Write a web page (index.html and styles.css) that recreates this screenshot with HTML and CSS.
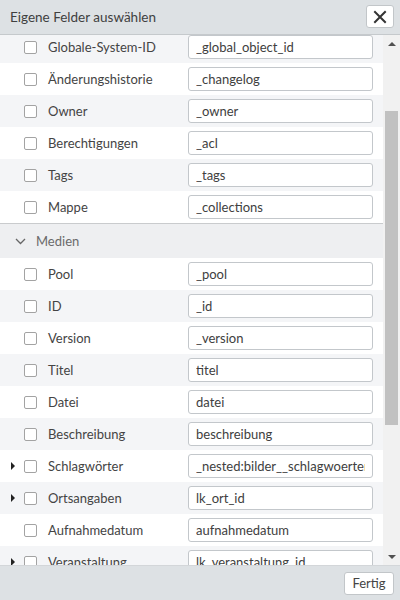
FILE: index.html
```html
<!DOCTYPE html>
<html lang="de">
<head>
<meta charset="utf-8">
<title>Eigene Felder auswählen</title>
<link rel="stylesheet" href="styles.css">
</head>
<body>
<div class="dialog">
  <div class="header">
    <span class="title">Eigene Felder auswählen</span>
    <button class="close" type="button" aria-label="Schließen">
      <svg width="14" height="14" viewBox="0 0 14 14"><path d="M2 2L12 12M12 2L2 12" stroke="#333" stroke-width="2" stroke-linecap="square" fill="none"/></svg>
    </button>
  </div>
  <div class="body">
    <div class="list">
      <div class="list-inner">
        <div class="row alt"><span class="caret"></span><span class="check"></span><span class="label">Globale-System-ID</span><input class="field" value="_global_object_id" readonly></div>
        <div class="row"><span class="caret"></span><span class="check"></span><span class="label">Änderungshistorie</span><input class="field" value="_changelog" readonly></div>
        <div class="row alt"><span class="caret"></span><span class="check"></span><span class="label">Owner</span><input class="field" value="_owner" readonly></div>
        <div class="row"><span class="caret"></span><span class="check"></span><span class="label">Berechtigungen</span><input class="field" value="_acl" readonly></div>
        <div class="row alt"><span class="caret"></span><span class="check"></span><span class="label">Tags</span><input class="field" value="_tags" readonly></div>
        <div class="row"><span class="caret"></span><span class="check"></span><span class="label">Mappe</span><input class="field" value="_collections" readonly></div>
        <div class="section">
          <svg class="chev" width="11" height="7" viewBox="0 0 11 7"><path d="M1 1L5.5 5.5L10 1" stroke="#666" stroke-width="1.3" fill="none"/></svg>
          <span class="section-title">Medien</span>
        </div>
        <div class="row"><span class="caret"></span><span class="check"></span><span class="label">Pool</span><input class="field" value="_pool" readonly></div>
        <div class="row alt"><span class="caret"></span><span class="check"></span><span class="label">ID</span><input class="field" value="_id" readonly></div>
        <div class="row"><span class="caret"></span><span class="check"></span><span class="label">Version</span><input class="field" value="_version" readonly></div>
        <div class="row alt"><span class="caret"></span><span class="check"></span><span class="label">Titel</span><input class="field" value="titel" readonly></div>
        <div class="row"><span class="caret"></span><span class="check"></span><span class="label">Datei</span><input class="field" value="datei" readonly></div>
        <div class="row alt"><span class="caret"></span><span class="check"></span><span class="label">Beschreibung</span><input class="field" value="beschreibung" readonly></div>
        <div class="row"><span class="caret on"></span><span class="check"></span><span class="label">Schlagwörter</span><input class="field" value="_nested:bilder__schlagwoerter" readonly></div>
        <div class="row alt"><span class="caret on"></span><span class="check"></span><span class="label">Ortsangaben</span><input class="field" value="lk_ort_id" readonly></div>
        <div class="row"><span class="caret"></span><span class="check"></span><span class="label">Aufnahmedatum</span><input class="field" value="aufnahmedatum" readonly></div>
        <div class="row alt"><span class="caret on"></span><span class="check"></span><span class="label">Veranstaltung</span><input class="field" value="lk_veranstaltung_id" readonly></div>
      </div>
    </div>
    <div class="scrollbar">
      <div class="sb-btn"><span class="arrow-up"></span></div>
      <div class="sb-track"><div class="sb-thumb"></div></div>
      <div class="sb-btn"><span class="arrow-down"></span></div>
    </div>
  </div>
  <div class="footer">
    <button class="btn" type="button">Fertig</button>
  </div>
</div>
</body>
</html>
```

FILE: styles.css
```css
* { box-sizing: border-box; }
html, body { margin: 0; padding: 0; }
body {
  font-family: "Lato", "Open Sans", "Liberation Sans", sans-serif;
  font-size: 13px;
  color: #444;
  background: #fff;
}
.dialog {
  width: 400px;
  height: 600px;
  display: flex;
  flex-direction: column;
  overflow: hidden;
}
.header {
  height: 35px;
  flex: none;
  display: flex;
  align-items: center;
  justify-content: space-between;
  padding: 0 6px 1px 10px;
  background: #dde1e4;
  border-bottom: 1px solid #c5c9cc;
}
.title {
  font-size: 13.5px;
  color: #404040;
}
.close {
  width: 28px;
  height: 23px;
  padding: 0;
  display: flex;
  align-items: center;
  justify-content: center;
  background: #fff;
  border: 1px solid #c2c6c9;
  border-radius: 3px;
}
.body {
  flex: 1;
  min-height: 0;
  display: flex;
}
.list {
  flex: 1;
  overflow: hidden;
}
.list-inner {
  margin-top: -4px;
}
.row {
  height: 32px;
  display: flex;
  align-items: center;
  background: #fff;
}
.row.alt { background: #f4f5f7; }
.caret {
  width: 24px;
  height: 32px;
  flex: none;
  display: flex;
  align-items: center;
}
.caret.on::before {
  content: "";
  margin-left: 11px;
  border-left: 4px solid #222;
  border-top: 4px solid transparent;
  border-bottom: 4px solid transparent;
}
.check {
  width: 13px;
  height: 13px;
  flex: none;
  margin-right: 11px;
  border: 1px solid #a3a3a3;
  border-radius: 2px;
  background: #fff;
}
.label {
  width: 140px;
  flex: none;
  white-space: nowrap;
  color: #444;
}
.field {
  width: 185px;
  height: 24px;
  flex: none;
  margin: 0;
  padding: 0 7px;
  font: inherit;
  font-size: 13px;
  color: #404040;
  background: #fff;
  border: 1px solid #c3c7cb;
  border-radius: 3px;
  outline: none;
}
.section {
  height: 35px;
  display: flex;
  align-items: center;
  padding-left: 15px;
  background: #eeeff1;
  border-top: 1px solid #c9cbcd;
}
.section-title {
  margin-left: 10px;
  color: #6a6a6a;
}
.scrollbar {
  width: 17px;
  flex: none;
  display: flex;
  flex-direction: column;
  background: #f1f1f1;
}
.sb-btn {
  height: 17px;
  flex: none;
  display: flex;
  align-items: center;
  justify-content: center;
}
.arrow-up {
  border-left: 4px solid transparent;
  border-right: 4px solid transparent;
  border-bottom: 4px solid #505050;
}
.arrow-down {
  border-left: 4px solid transparent;
  border-right: 4px solid transparent;
  border-top: 4px solid #505050;
}
.sb-track {
  flex: 1;
  padding: 0 2px;
}
.sb-thumb {
  margin-top: 59px;
  height: 314px;
  background: #c1c1c1;
}
.footer {
  height: 35px;
  flex: none;
  display: flex;
  align-items: center;
  justify-content: flex-end;
  padding-right: 6px;
  background: #dde1e4;
  border-top: 1px solid #d3d6d9;
}
.btn {
  height: 23px;
  width: 50px;
  padding: 0;
  font: inherit;
  font-size: 13px;
  color: #444;
  background: #fff;
  border: 1px solid #c2c6c9;
  border-radius: 3px;
}
```
